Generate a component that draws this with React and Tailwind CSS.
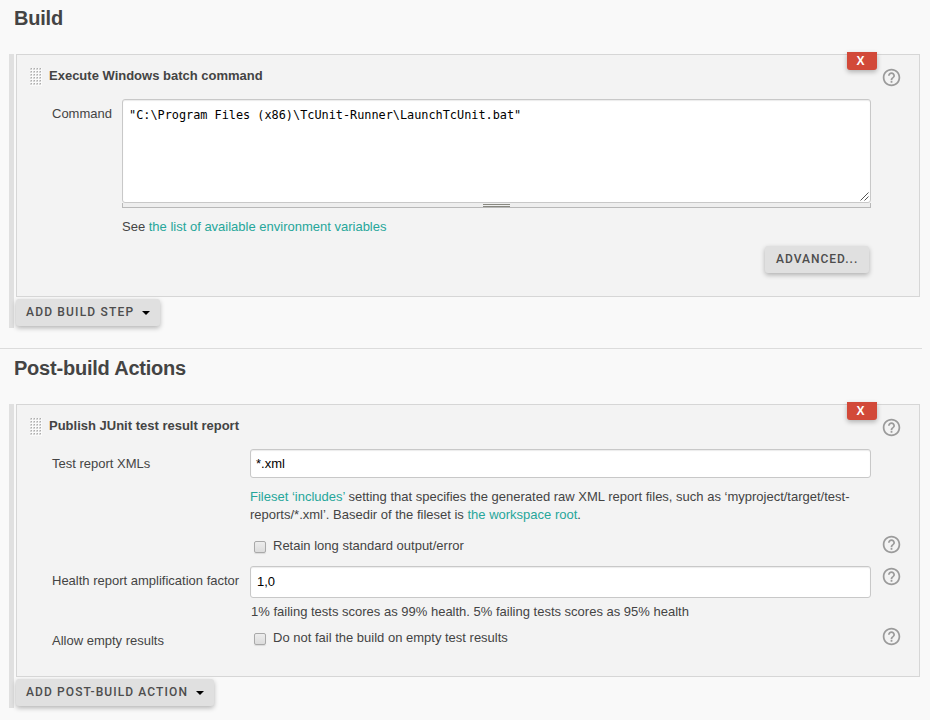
import React from "react";

function HelpIcon({ className = "ml-[10px]" }) {
  return (
    <svg viewBox="0 0 24 24" className={`size-[21px] shrink-0 fill-[#9b9b9b] ${className}`}>
      <path d="M11 18h2v-2h-2v2zm1-16C6.48 2 2 6.48 2 12s4.48 10 10 10 10-4.48 10-10S17.52 2 12 2zm0 18c-4.41 0-8-3.59-8-8s3.59-8 8-8 8 3.59 8 8-3.59 8-8 8zm0-14c-2.21 0-4 1.79-4 4h2c0-1.1.9-2 2-2s2 .9 2 2c0 2-3 1.75-3 5h2c0-2.25 3-2.5 3-5 0-2.21-1.79-4-4-4z" />
    </svg>
  );
}

function DragHandle() {
  const dots = [];
  for (let row = 0; row < 6; row++) {
    for (let col = 0; col < 4; col++) {
      dots.push(
        <g key={`${row}-${col}`}>
          <rect x={col * 3} y={row * 3} width="2" height="2" fill="#d6d6d6" />
          <rect x={col * 3 + 1} y={row * 3} width="1" height="1" fill="#adadad" />
        </g>
      );
    }
  }
  return (
    <svg width="12" height="18" viewBox="0 0 12 18" shapeRendering="crispEdges" className="shrink-0">
      <rect width="12" height="18" fill="#fafafa" />
      {dots}
    </svg>
  );
}

function Button({ className = "", children }) {
  return (
    <button
      className={`flex h-[27px] items-center rounded-[3px] bg-[#e0e0e0] text-left font-[Roboto,sans-serif] text-[12px] leading-[27px] font-medium whitespace-nowrap text-[#4d4d4d] shadow-[0_2px_5px_rgba(0,0,0,0.28)] ${className}`}
    >
      {children}
    </button>
  );
}

function Caret() {
  return (
    <svg width="8" height="4" viewBox="0 0 8 4" className="mt-px ml-2">
      <path d="M0 0h8L4 4z" fill="#000" />
    </svg>
  );
}

function Panel({ title, className, children }) {
  return (
    <div className={`relative w-[904px] border border-[#d6d6d6] bg-[#f3f3f3] ${className}`}>
      <button className="absolute -top-[3px] left-[830px] h-[18px] w-[30px] rounded-b-[3px] bg-[#d24939] pr-[3px] text-[12px] leading-[18px] font-bold text-white shadow-[0_2px_5px_rgba(0,0,0,0.28)]">
        X
      </button>
      <div className="flex h-[44px] items-start pt-[13px] pl-[13px]">
        <DragHandle />
        <div className="ml-[7px] w-[815px] text-[13px] leading-[15px] font-bold">
          <span>{title}</span>
        </div>
        <HelpIcon className="-mt-px ml-[17px]" />
      </div>
      {children}
    </div>
  );
}

function Section({ title, children }) {
  return (
    <section>
      <h2 className="h-[54px] pl-[14px] text-[20px] leading-[36px] font-bold tracking-[-0.22px]">{title}</h2>
      <div className="ml-[9px] flex">
        <div className="mr-[2px] w-[5px] shrink-0 bg-[#e0e0e0]" />
        {children}
      </div>
    </section>
  );
}

function Checkbox() {
  return (
    <span className="block size-[12px] shrink-0 rounded-[2px] border border-[#a9a9a9] bg-linear-to-b from-[#ededed] to-[#dcdcdc] shadow-[0_1px_1px_rgba(0,0,0,0.1)]" />
  );
}

export default function App() {
  return (
    <main className="h-[720px] w-[930px] overflow-hidden bg-[#f9f9f9] font-['Liberation_Sans',Arial,sans-serif] text-[13px] leading-[18px] text-[#444]">
      <Section title="Build">
        <div className="h-[274px]">
          <Panel title="Execute Windows batch command" className="h-[243px]">
            <div className="flex pl-[35px]">
              <div className="w-[70px] pt-[6px]">Command</div>
              <div className="w-[749px]">
                <div className="flex h-[104px] justify-between rounded-[3px] border border-[#c8c8c8] bg-white shadow-[inset_0_1px_1px_rgba(0,0,0,0.08)]">
                  <div className="pt-[7px] pl-[6px] font-['DejaVu_Sans_Mono',monospace] text-[11.85px] leading-[16px] whitespace-pre text-black">
                    {'"C:\\Program Files (x86)\\TcUnit-Runner\\LaunchTcUnit.bat"'}
                  </div>
                  <svg width="9" height="9" viewBox="0 0 9 9" className="mr-px mb-px self-end stroke-[#555]">
                    <path d="M0.5 8.5l8-8M4.5 8.5l4-4" />
                  </svg>
                </div>
                <div className="flex h-[5px] justify-center border border-t-0 border-[#b8b8b8] bg-[#eee] pt-px">
                  <div className="h-[3px] w-[27px] border-y border-[#888880]" />
                </div>
                <div className="mt-[10px]">
                  See <a className="text-[#26a69a]">the list of available environment variables</a>
                </div>
                <div className="mt-[10px] flex justify-end pr-[2px]">
                  <Button className="w-[104px] pl-[11px] tracking-[1px]">
                    <span>ADVANCED...</span>
                  </Button>
                </div>
              </div>
            </div>
          </Panel>
          <Button className="mt-[2px] w-[144px] pl-[10px] tracking-[1.18px]">
            <span>ADD BUILD STEP</span>
            <Caret />
          </Button>
        </div>
      </Section>

      <div className="mt-[20px] h-px w-[922px] bg-[#dcdcdc]" />

      <div className="mt-px">
        <Section title="Post-build Actions">
          <div className="h-[304px]">
            <Panel title="Publish JUnit test result report" className="h-[273px]">
              <div className="flex h-[88px] pl-[35px]">
                <div className="w-[198px] pt-[6px]">Test report XMLs</div>
                <div className="w-[621px]">
                  <div className="h-[29px] rounded-[3px] border border-[#c8c8c8] bg-white pl-[5px] leading-[28px] text-black shadow-[inset_0_1px_1px_rgba(0,0,0,0.08)]">
                    *.xml
                  </div>
                  <div className="mt-[10px] whitespace-nowrap">
                    <a className="text-[#26a69a]">Fileset ‘includes’</a> setting that specifies the generated raw XML report files, such as ‘myproject/target/test-
                    <br />
                    reports/*.xml’. Basedir of the fileset is <a className="text-[#26a69a]">the workspace root</a>.
                  </div>
                </div>
              </div>
              <div className="flex h-[29px] pl-[237px]">
                <div className="mt-[4px]">
                  <Checkbox />
                </div>
                <div className="ml-[7px] w-[598px]">Retain long standard output/error</div>
                <HelpIcon className="-mt-[3px] ml-[10px]" />
              </div>
              <div className="flex h-[63px] pl-[35px]">
                <div className="w-[198px] pt-[6px]">Health report amplification factor</div>
                <div className="w-[621px]">
                  <div className="h-[32px] rounded-[3px] border border-[#c8c8c8] bg-white pl-[6px] leading-[29px] text-black shadow-[inset_0_1px_1px_rgba(0,0,0,0.08)]">
                    1,0
                  </div>
                  <div className="mt-[5px] pl-px">1% failing tests scores as 99% health. 5% failing tests scores as 95% health</div>
                </div>
                <HelpIcon />
              </div>
              <div className="flex pl-[35px]">
                <div className="w-[202px] pt-[3px]">Allow empty results</div>
                <div className="mt-[4px]">
                  <Checkbox />
                </div>
                <div className="ml-[7px] w-[598px]">Do not fail the build on empty test results</div>
                <HelpIcon className="-mt-[3px] ml-[10px]" />
              </div>
            </Panel>
            <Button className="mt-[2px] w-[198px] pl-[10px] tracking-[1.1px]">
              <span>ADD POST-BUILD ACTION</span>
              <Caret />
            </Button>
          </div>
        </Section>
      </div>
    </main>
  );
}
